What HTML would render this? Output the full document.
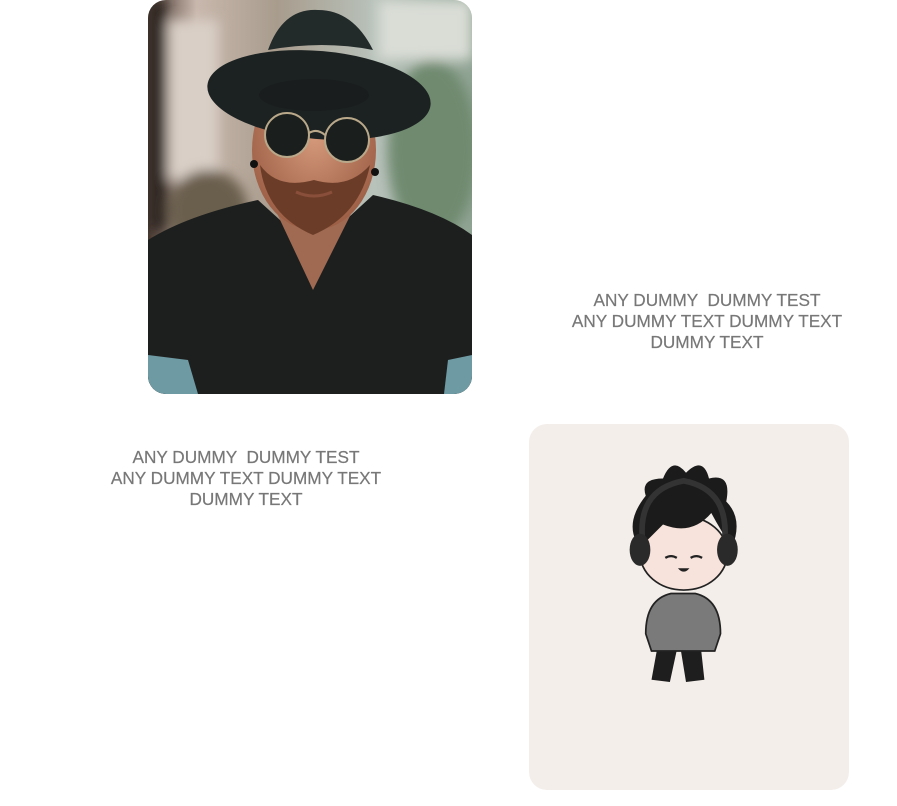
<!DOCTYPE html>
<html><head><style>
body{margin:0;width:897px;height:806px;background:#fff;position:relative;overflow:hidden;font-family:"Liberation Sans",Arial,sans-serif}
.t{position:absolute;text-align:center;color:#777;font-size:17.2px;line-height:21px;white-space:pre;width:340px;-webkit-text-stroke:0.2px #777}
.card{position:absolute;border-radius:18px;overflow:hidden}
</style></head><body>
<div class="card" style="left:148px;top:0;width:324px;height:394px">
<svg width="324" height="394" viewBox="0 0 324 394">
<defs>
<linearGradient id="bg" x1="0" y1="0" x2="1" y2="0">
<stop offset="0" stop-color="#4a3a32"/><stop offset="0.15" stop-color="#c9b8ad"/><stop offset="0.4" stop-color="#a89c8d"/><stop offset="0.7" stop-color="#b8c2bb"/><stop offset="1" stop-color="#8fa393"/></linearGradient>
<filter id="b"><feGaussianBlur stdDeviation="6"/></filter>
<radialGradient id="sk" cx="0.5" cy="0.4" r="0.6"><stop offset="0" stop-color="#d69a7c"/><stop offset="1" stop-color="#9c5e45"/></radialGradient>
</defs>
<rect width="324" height="394" fill="url(#bg)"/>
<g filter="url(#b)">
<rect x="0" y="0" width="18" height="230" fill="#2e2520"/>
<rect x="20" y="20" width="50" height="160" fill="#d9cfc6"/>
<rect x="230" y="0" width="94" height="60" fill="#d9ddd6"/>
<ellipse cx="285" cy="150" rx="45" ry="90" fill="#6f8a70"/>
<ellipse cx="60" cy="210" rx="40" ry="40" fill="#6a5e4e"/>
</g>
<path d="M0 240 Q40 215 110 200 L165 250 L225 195 Q290 210 324 235 L324 394 L0 394Z" fill="#1d1f1e"/>
<path d="M0 355 L40 360 L50 394 L0 394Z" fill="#6e9aa4"/>
<path d="M300 360 L324 355 L324 394 L296 394Z" fill="#6e9aa4"/>
<path d="M118 190 L165 290 L215 190 L210 170 L122 170Z" fill="#a06a52"/>
<ellipse cx="166" cy="150" rx="62" ry="80" fill="url(#sk)"/>
<path d="M112 165 Q118 215 165 235 Q212 215 222 165 Q200 190 166 180 Q130 190 112 165Z" fill="#6b3d28"/>
<path d="M148 192 Q166 200 184 192" stroke="#8a4f3a" stroke-width="3" fill="none"/>
<ellipse cx="171" cy="95" rx="112" ry="44" fill="#1c2222" transform="rotate(5 171 95)"/>
<path d="M120 50 Q135 8 170 10 Q205 10 225 50 Q175 40 120 50Z" fill="#232a2a"/>
<ellipse cx="166" cy="95" rx="55" ry="16" fill="#1a1d1d"/>
<circle cx="139" cy="135" r="22" fill="#1a1e1d" stroke="#b9a88a" stroke-width="2"/>
<circle cx="199" cy="140" r="22" fill="#1a1e1d" stroke="#b9a88a" stroke-width="2"/>
<path d="M161 133 Q169 128 177 135" stroke="#b9a88a" stroke-width="2" fill="none"/>
<circle cx="106" cy="164" r="4" fill="#111"/><circle cx="227" cy="172" r="4" fill="#111"/>
</svg></div>
<div class="t" style="left:537px;top:290px">ANY DUMMY  DUMMY TEST
ANY DUMMY TEXT DUMMY TEXT
DUMMY TEXT</div>
<div class="t" style="left:76px;top:447px">ANY DUMMY  DUMMY TEST
ANY DUMMY TEXT DUMMY TEXT
DUMMY TEXT</div>
<div class="card" style="left:529px;top:424px;width:320px;height:366px;background:#f3eeea">
<svg width="320" height="366" viewBox="0 0 320 366">
<g transform="translate(88,20) scale(1.15)">
<path d="M40 150 L30 205 L46 207 L54 170 L60 207 L76 205 L70 150Z" fill="#1e1e1e"/>
<path d="M47 130 Q25 135 25 165 L30 180 L85 180 L90 165 Q90 135 68 130Z" fill="#7a7a7a" stroke="#222" stroke-width="1.5"/>
<ellipse cx="58" cy="95" rx="38" ry="32" fill="#f7e3dc" stroke="#222" stroke-width="1.5"/>
<path d="M20 90 Q5 70 25 45 Q20 30 40 30 Q48 10 60 25 Q75 10 80 30 Q100 25 95 50 Q110 65 100 90 Q90 75 82 60 Q65 80 40 70 Q30 80 20 90Z" fill="#1b1b1b"/>
<path d="M23 90 Q15 40 58 32 Q100 40 93 90" stroke="#333" stroke-width="5" fill="none"/>
<ellipse cx="20" cy="92" rx="9" ry="14" fill="#2a2a2a"/>
<ellipse cx="96" cy="92" rx="9" ry="14" fill="#2a2a2a"/>
<path d="M42 99 Q47 96 52 99 M64 99 Q69 96 74 99" stroke="#222" stroke-width="2" fill="none"/>
<path d="M53 108 Q58 114 63 108Z" fill="#222"/>
</g></svg></div>
</body></html>
